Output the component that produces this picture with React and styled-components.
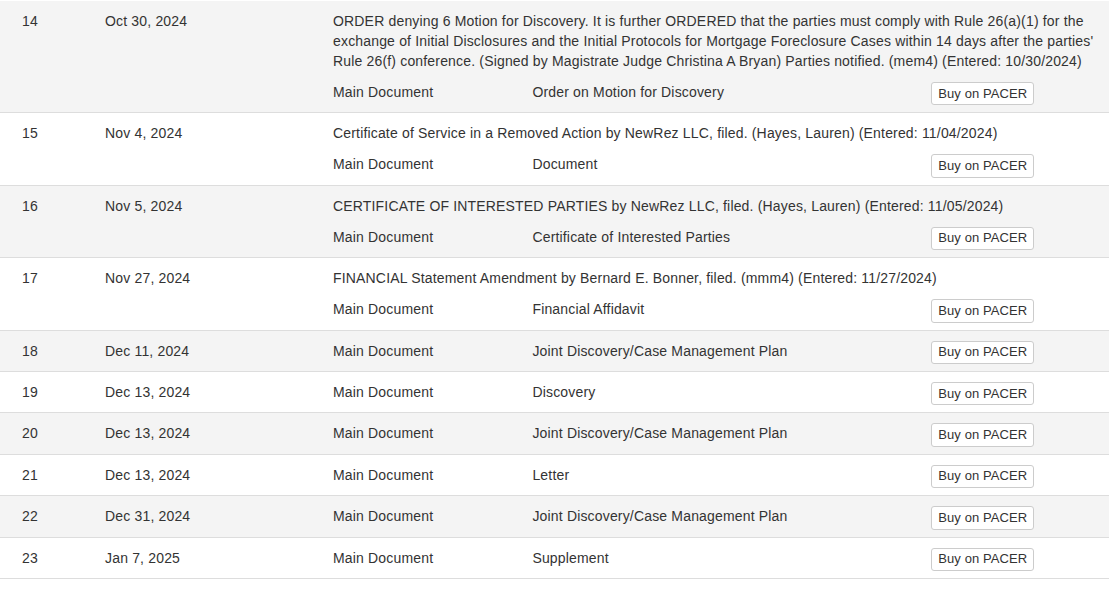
import React from 'react'
import styled, { createGlobalStyle } from 'styled-components'

const GlobalStyle = createGlobalStyle`
  html, body {
    margin: 0;
    padding: 0;
    background: #fff;
  }
  body {
    font-family: "Liberation Sans", Arial, Helvetica, sans-serif;
    font-size: 14px;
    line-height: 20px;
    letter-spacing: 0.17px;
    color: #333;
  }
`

const Docket = styled.div`
  width: 1109px;
  margin-top: 1px;
`

const Entry = styled.div`
  display: grid;
  grid-template-columns: 105px 228px 1fr;
  align-items: start;
  padding: 10px 9px 7px 0;
  border-bottom: 1px solid #ddd;
  background: ${p => (p.$striped ? '#f4f4f4' : '#fff')};
`

const Num = styled.div`
  padding-left: 22px;
`

const DateCell = styled.div``

const DocCell = styled.div`
  min-width: 0;
`

const Text = styled.div`
  margin-bottom: 11px;
`

const DocRow = styled.div`
  display: grid;
  grid-template-columns: 26% 52% 22%;
  align-items: start;
`

const BuyButton = styled.button`
  justify-self: start;
  box-sizing: border-box;
  height: 23.4px;
  font-family: inherit;
  font-size: 13px;
  line-height: 20px;
  letter-spacing: 0.1px;
  color: #333;
  background: #fff;
  border: 1px solid #ccc;
  border-radius: 3px;
  padding: 0 6px;
  cursor: pointer;
`

const entries = [
  {
    n: 14,
    date: 'Oct 30, 2024',
    text: "ORDER denying 6 Motion for Discovery. It is further ORDERED that the parties must comply with Rule 26(a)(1) for the exchange of Initial Disclosures and the Initial Protocols for Mortgage Foreclosure Cases within 14 days after the parties' Rule 26(f) conference. (Signed by Magistrate Judge Christina A Bryan) Parties notified. (mem4) (Entered: 10/30/2024)",
    doc: 'Order on Motion for Discovery',
  },
  {
    n: 15,
    date: 'Nov 4, 2024',
    text: 'Certificate of Service in a Removed Action by NewRez LLC, filed. (Hayes, Lauren) (Entered: 11/04/2024)',
    doc: 'Document',
  },
  {
    n: 16,
    date: 'Nov 5, 2024',
    text: 'CERTIFICATE OF INTERESTED PARTIES by NewRez LLC, filed. (Hayes, Lauren) (Entered: 11/05/2024)',
    doc: 'Certificate of Interested Parties',
  },
  {
    n: 17,
    date: 'Nov 27, 2024',
    text: 'FINANCIAL Statement Amendment by Bernard E. Bonner, filed. (mmm4) (Entered: 11/27/2024)',
    doc: 'Financial Affidavit',
  },
  { n: 18, date: 'Dec 11, 2024', doc: 'Joint Discovery/Case Management Plan' },
  { n: 19, date: 'Dec 13, 2024', doc: 'Discovery' },
  { n: 20, date: 'Dec 13, 2024', doc: 'Joint Discovery/Case Management Plan' },
  { n: 21, date: 'Dec 13, 2024', doc: 'Letter' },
  { n: 22, date: 'Dec 31, 2024', doc: 'Joint Discovery/Case Management Plan' },
  { n: 23, date: 'Jan 7, 2025', doc: 'Supplement' },
]

const App = () => {
  return (
    <>
      <GlobalStyle />
      <Docket>
        {entries.map((e, i) => (
          <Entry key={e.n} $striped={i % 2 === 0}>
            <Num>{e.n}</Num>
            <DateCell>{e.date}</DateCell>
            <DocCell>
              {e.text && <Text>{e.text}</Text>}
              <DocRow>
                <div>Main Document</div>
                <div>{e.doc}</div>
                <BuyButton>Buy on PACER</BuyButton>
              </DocRow>
            </DocCell>
          </Entry>
        ))}
      </Docket>
    </>
  )
}

export default App
